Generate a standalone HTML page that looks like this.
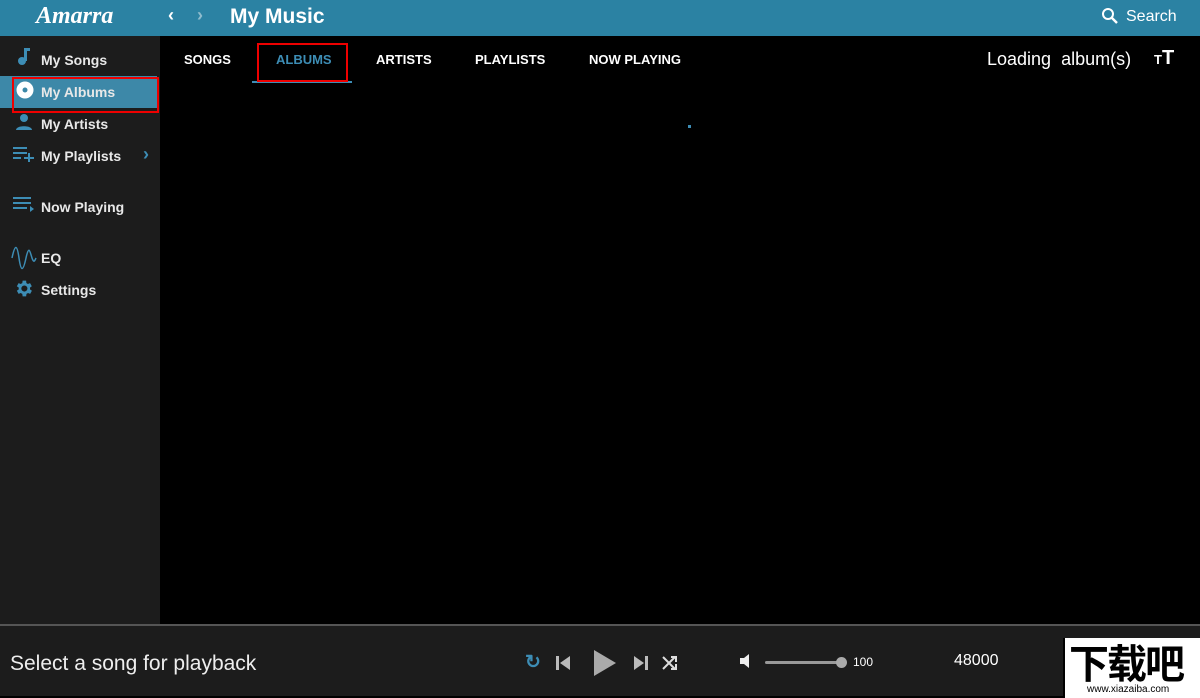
<!DOCTYPE html>
<html><head><style>
*{margin:0;padding:0;box-sizing:border-box}
body{width:1200px;height:696px;background:#000;font-family:"Liberation Sans",sans-serif;position:relative;overflow:hidden;color:#fff}
.hdr{position:absolute;left:0;top:0;width:1200px;height:36px;background:#2b82a3}
.side{position:absolute;left:0;top:36px;width:160px;height:588px;background:#1c1c1c}
.item{position:absolute;left:41px;font-size:14px;font-weight:bold;color:#e8e8e8}
.tab{position:absolute;top:52px;font-size:13px;font-weight:bold;color:#fff}
.bot{position:absolute;left:0;top:624px;width:1200px;height:72px;background:#1c1c1c;border-top:2px solid #555}
.red{position:absolute;border:2px solid #e00}
</style></head><body>
<div class="hdr">
<div style="position:absolute;left:36px;top:3px;font-family:'Liberation Serif',serif;font-style:italic;font-weight:bold;font-size:24px">Amarra</div>
<div style="position:absolute;left:168px;top:5px;font-size:18px;font-weight:bold">&#8249;</div>
<div style="position:absolute;left:197px;top:5px;font-size:18px;font-weight:bold;color:#8fbccd">&#8250;</div>
<div style="position:absolute;left:230px;top:5px;font-size:21px;font-weight:bold">My Music</div>
<svg style="position:absolute;left:1101px;top:7px" width="18" height="18" viewBox="0 0 18 18"><circle cx="7" cy="7" r="5" fill="none" stroke="#fff" stroke-width="2"/><path d="M11 11l5 5" stroke="#fff" stroke-width="2.4"/></svg>
<div style="position:absolute;left:1126px;top:8px;font-size:16px">Search</div>
</div>
<div class="side">
<div style="position:absolute;left:0;top:40px;width:157px;height:32px;background:#3d88a8"></div>
</div>
<svg style="position:absolute;left:15px;top:48px" width="16" height="18"><rect x="9" y="0" width="3" height="13" fill="#3d8db5"/><rect x="9" y="0" width="6" height="3" fill="#3d8db5"/><circle cx="7" cy="13" r="4" fill="#3d8db5"/></svg>
<div class="item" style="top:52px">My Songs</div>
<svg style="position:absolute;left:15px;top:80px" width="20" height="20"><circle cx="10" cy="10" r="8.5" fill="#fff"/><circle cx="10" cy="10" r="2.5" fill="#3d88a8"/></svg>
<div class="item" style="top:84px">My Albums</div>
<svg style="position:absolute;left:15px;top:113px" width="18" height="18"><circle cx="9" cy="5" r="4" fill="#3d8db5"/><path d="M1 17c0-5 16-5 16 0z" fill="#3d8db5"/></svg>
<div class="item" style="top:116px">My Artists</div>
<svg style="position:absolute;left:13px;top:146px" width="22" height="16"><path d="M0 2h14M0 7h14M0 12h8M11 12h10M16 7v10" stroke="#3d8db5" stroke-width="2"/></svg>
<div class="item" style="top:148px">My Playlists</div>
<div style="position:absolute;left:143px;top:144px;color:#3d8db5;font-size:18px;font-weight:bold">&#8250;</div>
<svg style="position:absolute;left:13px;top:196px" width="22" height="16"><path d="M0 2h18M0 7h18M0 12h14" stroke="#3d8db5" stroke-width="2"/><path d="M17 10l4 3-4 3z" fill="#3d8db5"/></svg>
<div class="item" style="top:199px">Now Playing</div>
<svg style="position:absolute;left:11px;top:246px" width="26" height="24"><path d="M1 12c3-14 5-14 7 0s4 14 7 0 4-6 6 0 3 2 4 0" fill="none" stroke="#3d8db5" stroke-width="1.5"/></svg>
<div class="item" style="top:250px">EQ</div>
<svg style="position:absolute;left:13px;top:278px" width="21" height="21" viewBox="0 0 24 24"><path fill="#3d8db5" d="M19.4 13a7.5 7.5 0 000-2l2.1-1.6-2-3.5-2.5 1a7 7 0 00-1.7-1L15 3h-4l-.4 2.9a7 7 0 00-1.7 1l-2.5-1-2 3.5L6.6 11a7.5 7.5 0 000 2l-2.2 1.6 2 3.5 2.5-1a7 7 0 001.7 1L11 21h4l.4-2.9a7 7 0 001.7-1l2.5 1 2-3.5zM13 15.5a3.5 3.5 0 110-7 3.5 3.5 0 010 7z"/></svg>
<div class="item" style="top:282px">Settings</div>
<div class="red" style="left:12px;top:77px;width:147px;height:36px"></div>

<div class="tab" style="left:184px">SONGS</div>
<div class="tab" style="left:276px;color:#3d8db5">ALBUMS</div>
<div style="position:absolute;left:252px;top:81px;width:100px;height:2px;background:#3d8db5"></div>
<div class="red" style="left:257px;top:43px;width:91px;height:39px"></div>
<div class="tab" style="left:376px">ARTISTS</div>
<div class="tab" style="left:475px">PLAYLISTS</div>
<div class="tab" style="left:589px">NOW PLAYING</div>
<div style="position:absolute;left:987px;top:49px;font-size:18px">Loading&nbsp; album(s)</div>
<div style="position:absolute;left:1154px;top:47px;font-size:20px;font-weight:bold"><span style="font-size:13px">T</span>T</div>
<div style="position:absolute;left:688px;top:125px;width:3px;height:3px;background:#3d8db5"></div>

<div class="bot">
<div style="position:absolute;left:10px;top:26px;font-size:21px;color:#eee">Select a song for playback</div>
<div style="position:absolute;left:525px;top:25px;font-size:19px;color:#3d8db5;font-weight:bold">&#8635;</div>
<svg style="position:absolute;left:556px;top:30px" width="14" height="14"><rect x="0" y="0" width="3" height="14" fill="#bbb"/><path d="M14 0v14L4 7z" fill="#bbb"/></svg>
<svg style="position:absolute;left:594px;top:24px" width="22" height="26"><path d="M0 0v26l22-13z" fill="#aaa"/></svg>
<svg style="position:absolute;left:634px;top:30px" width="14" height="14"><path d="M0 0v14l10-7z" fill="#bbb"/><rect x="11" y="0" width="3" height="14" fill="#bbb"/></svg>
<svg style="position:absolute;left:662px;top:29px" width="16" height="16"><path d="M1 2l12 12M1 14l12-12M9 2h5v5M9 14h5v-5" stroke="#ddd" stroke-width="2" fill="none"/></svg>
<svg style="position:absolute;left:740px;top:28px" width="14" height="14"><path d="M0 4h4l5-4v14l-5-4H0z" fill="#eee"/></svg>
<div style="position:absolute;left:765px;top:35px;width:78px;height:3px;background:#999;border-radius:2px"></div>
<div style="position:absolute;left:836px;top:31px;width:11px;height:11px;background:#aaa;border-radius:50%"></div>
<div style="position:absolute;left:853px;top:29px;font-size:12px">100</div>
<div style="position:absolute;left:954px;top:26px;font-size:16px">48000</div>
<div style="position:absolute;left:1063px;top:12px;width:137px;height:60px;background:#fff;border-left:2px solid #000"><div style="position:absolute;left:4px;top:0;font-family:'Noto Sans CJK SC',sans-serif;font-weight:bold;font-size:40px;color:#000;line-height:46px;letter-spacing:-2px">下载吧</div><div style="position:absolute;left:22px;top:46px;font-size:10px;color:#000">www.xiazaiba.com</div></div>
</div>
</body></html>
